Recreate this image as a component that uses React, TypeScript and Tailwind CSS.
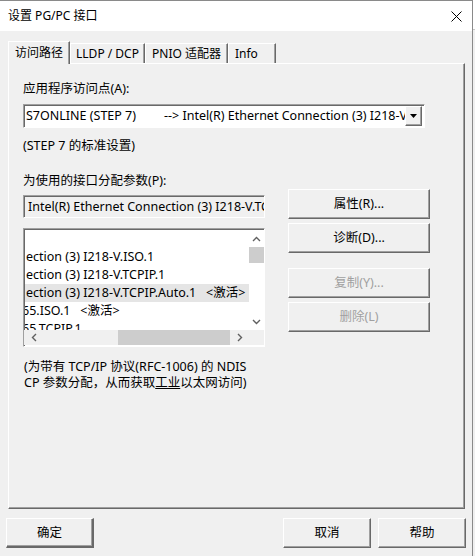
import type { ReactNode } from 'react';

const font = "font-['Noto_Sans','Noto_Sans_CJK_SC',sans-serif]";

const raised =
  'border border-t-white border-l-white border-r-[#696969] border-b-[#696969] shadow-[inset_-1px_-1px_0_#a0a0a0]';
const sunken =
  'border border-t-[#a0a0a0] border-l-[#a0a0a0] border-r-white border-b-white shadow-[inset_1px_1px_0_#696969]';

function Btn({ children, disabled, className = '' }: { children: ReactNode; disabled?: boolean; className?: string }) {
  return (
    <div
      className={`flex items-center justify-center bg-[#f0f0f0] ${raised} ${
        disabled ? 'text-[#a0a0a0]' : 'text-black'
      } ${className}`}
    >
      {children}
    </div>
  );
}

function Tab({ label, active, className = '' }: { label: string; active?: boolean; className?: string }) {
  if (active) {
    return (
      <div className="relative z-10 -mb-px flex h-[23px] w-[62px] items-start justify-center whitespace-nowrap bg-[#f0f0f0] pt-[3px] text-[12px] border-t border-l border-t-white border-l-white border-r border-r-[#696969] shadow-[inset_-1px_0_0_#a0a0a0]">
        {label}
      </div>
    );
  }
  return (
    <div
      className={`flex h-[20px] items-start justify-center whitespace-nowrap bg-[#f0f0f0] pt-[2px] text-[12px] border-t border-l border-t-white border-l-white border-r border-r-[#696969] shadow-[inset_-1px_0_0_#a0a0a0] ${className}`}
    >
      {label}
    </div>
  );
}

function ChevronUp() {
  return (
    <svg width="9" height="6" viewBox="0 0 9 6" fill="none" stroke="#606060" strokeWidth="1.4">
      <path d="M1 5 L4.5 1.5 L8 5" />
    </svg>
  );
}
function ChevronDown() {
  return (
    <svg width="9" height="6" viewBox="0 0 9 6" fill="none" stroke="#606060" strokeWidth="1.4">
      <path d="M1 1 L4.5 4.5 L8 1" />
    </svg>
  );
}
function ChevronLeft() {
  return (
    <svg width="6" height="9" viewBox="0 0 6 9" fill="none" stroke="#606060" strokeWidth="1.4">
      <path d="M5 1 L1.5 4.5 L5 8" />
    </svg>
  );
}
function ChevronRight() {
  return (
    <svg width="6" height="9" viewBox="0 0 6 9" fill="none" stroke="#606060" strokeWidth="1.4">
      <path d="M1 1 L4.5 4.5 L1 8" />
    </svg>
  );
}

const rows = [
  { text: '', active: false },
  { text: 'ection (3) I218-V.ISO.1', active: false },
  { text: 'ection (3) I218-V.TCPIP.1', active: false },
  { text: 'ection (3) I218-V.TCPIP.Auto.1\u00a0\u00a0\u00a0<激活>', active: true },
  { text: '65.ISO.1\u00a0\u00a0\u00a0<激活>', active: false, shift: true },
  { text: '65.TCPIP.1', active: false, shift: true },
];

export default function App() {
  return (
    <div className={`flex h-[556px] w-[475px] overflow-hidden bg-[#f0f0f0] text-[12.5px] leading-[16px] text-black ${font}`}>
      {/* window */}
      <div className="flex w-[473px] flex-col border-t border-r border-[#8a8a8a]">
        {/* title bar */}
        <div className="flex h-[30px] items-center justify-between bg-white pl-[8px] pr-[10px]">
          <span className="text-[12px]">设置 PG/PC 接口</span>
          <svg width="11" height="11" viewBox="0 0 11 11" stroke="#000" strokeWidth="1">
            <path d="M0.5 0.5 L10.5 10.5 M10.5 0.5 L0.5 10.5" />
          </svg>
        </div>

        <div className="flex flex-1 flex-col bg-[#f0f0f0] pt-[10px]">
          {/* tabs */}
          <div className="ml-[8px] flex h-[22px] items-end">
            <Tab label="访问路径" active />
            <Tab label="LLDP / DCP" className="w-[75px]" />
            <Tab label="PNIO 适配器" className="w-[83px]" />
            <Tab label="Info" className="w-[48px] justify-start pl-[6px]" />
          </div>

          {/* panel */}
          <div className={`ml-[8px] flex h-[446px] w-[457px] flex-col pl-[14px] pt-[17px] ${raised}`}>
            <div>应用程序访问点(A):</div>

            <div className={`mt-[7px] flex h-[24px] w-[402px] items-center bg-white pl-[1px] pr-[2px] ${sunken}`}>
              <div className="flex-1 overflow-hidden whitespace-nowrap pl-[1px]">
                <span className="inline-block w-[138px]">S7ONLINE (STEP 7)</span>
                <span>--&gt; Intel(R) Ethernet Connection (3) I218-V.TCPIP.Auto.1</span>
              </div>
              <div className={`flex h-[20px] w-[17px] items-center justify-center bg-[#f0f0f0] ${raised}`}>
                <svg width="7" height="4" viewBox="0 0 7 4">
                  <path d="M0 0 H7 L3.5 4 Z" fill="#000" />
                </svg>
              </div>
            </div>

            <div className="mt-[10px]">(STEP 7 的标准设置)</div>
            <div className="mt-[19px]">为使用的接口分配参数(P):</div>

            <div className="flex items-start">
              <div className="mt-[6px] flex w-[242px] flex-col">
                <div className={`flex h-[23px] items-center overflow-hidden whitespace-nowrap bg-[#f0f0f0] pl-[4px] ${sunken}`}>
                  Intel(R) Ethernet Connection (3) I218-V.TCPIP.Auto.1
                </div>

                <div className={`mt-[10px] flex h-[119px] flex-col bg-white ${sunken}`}>
                  <div className="flex h-[101px] pt-px pl-px">
                    <div className="flex-1 overflow-hidden whitespace-nowrap">
                      {rows.map((r, i) => (
                        <div
                          key={i}
                          className={`flex h-[18px] items-center ${r.active ? 'bg-[#e5e5e5]' : ''} ${
                            r.shift ? '-ml-[3px]' : 'pl-px'
                          }`}
                        >
                          {r.text}
                        </div>
                      ))}
                    </div>
                    <div className="flex w-[15px] flex-col bg-white">
                      <div className="flex h-[17px] items-center justify-center">
                        <ChevronUp />
                      </div>
                      <div className="h-[16px] bg-[#cdcdcd]" />
                      <div className="flex-1" />
                      <div className="flex h-[17px] items-center justify-center">
                        <ChevronDown />
                      </div>
                    </div>
                  </div>
                  <div className="flex h-[15px] bg-[#f0f0f0] pl-px">
                    <div className="flex w-[17px] items-center justify-center">
                      <ChevronLeft />
                    </div>
                    <div className="flex flex-1 items-stretch pl-[76px] pr-[1px]">
                      <div className="w-[112px] bg-[#cdcdcd]" />
                    </div>
                    <div className="flex w-[17px] items-center justify-center">
                      <ChevronRight />
                    </div>
                    <div className="w-[16px]" />
                  </div>
                </div>
              </div>

              <div className="ml-[23px] flex w-[142px] flex-col">
                <Btn className="h-[30px]">属性(R)...</Btn>
                <Btn className="mt-[4px] h-[30px]">诊断(D)...</Btn>
                <Btn disabled className="mt-[15px] h-[30px]">复制(Y)...</Btn>
                <Btn disabled className="mt-[4px] h-[30px]">删除(L)</Btn>
              </div>
            </div>

            <div className="mt-[12px] pl-[1px]">
              <div>(为带有 TCP/IP 协议(RFC-1006) 的 NDIS</div>
              <div>
                CP 参数分配，从而获取<span className="underline">工业</span>以太网访问)
              </div>
            </div>
          </div>

          {/* bottom buttons */}
          <div className="mt-[9px] flex">
            <Btn className="ml-[6px] h-[30px] w-[88px] border-r-2 border-b-2 border-r-[#555] border-b-[#555]">确定</Btn>
            <Btn className="ml-[189px] h-[30px] w-[88px]">取消</Btn>
            <Btn className="ml-[7px] h-[30px] w-[88px]">帮助</Btn>
          </div>
        </div>
      </div>
      {/* background behind window */}
      <div className="flex w-[2px] flex-col">
        <div className="h-[30px] border-b border-[#c8c8c8] bg-white" />
        <div className="flex-1 bg-[#f0f0f0]" />
      </div>
    </div>
  );
}
